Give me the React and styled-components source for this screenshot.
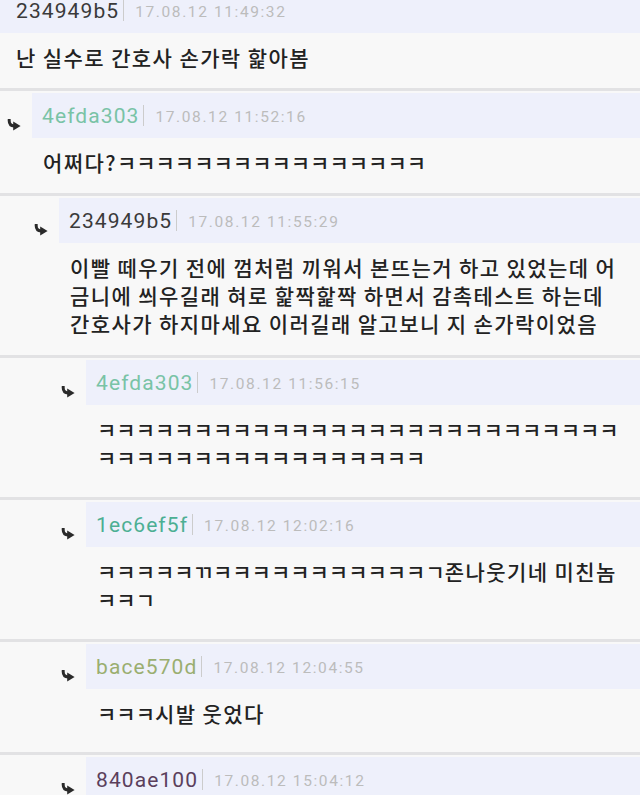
import React from "react";
import styled, { createGlobalStyle } from "styled-components";

const GlobalStyle = createGlobalStyle`
  html, body {
    margin: 0;
    padding: 0;
    background: #f8f8f8;
    overflow: hidden;
  }
`;

const Page = styled.div`
  width: 640px;
  height: 795px;
  overflow: hidden;
  background: #f8f8f8;
`;

// the screenshot starts part-way through the first comment header
const Thread = styled.div`
  margin-top: -14px;
`;

const Comment = styled.div`
  border-bottom: 3px solid #e2e2e4;
`;

const HeaderRow = styled.div`
  display: flex;
  align-items: flex-end;
  margin-top: 2px;
  padding-left: ${(p) => (p.$depth === 0 ? 0 : p.$depth * 27 - 20)}px;
`;

const ArrowBox = styled.div`
  width: 14px;
  height: 12px;
  margin: 0 11px 7px 0;
  flex-shrink: 0;
  display: flex;
`;

const Bar = styled.div`
  flex: 1;
  height: 45px;
  background: #eef0fb;
  display: flex;
  align-items: center;
  padding-left: ${(p) => (p.$depth === 0 ? 16 : 10)}px;
`;

const Name = styled.span`
  font-family: Roboto, "Liberation Sans", sans-serif;
  font-size: 21px;
  letter-spacing: 1.1px;
  color: ${(p) => p.$color};
`;

const Pipe = styled.span`
  width: 1px;
  height: 21px;
  background: #cccccc;
  margin: 0 11px 0 4px;
`;

const Stamp = styled.span`
  font-family: Roboto, "Liberation Sans", sans-serif;
  font-size: 15.5px;
  letter-spacing: 1.6px;
  color: #bcbcbc;
  padding-top: 2px;
`;

const Body = styled.div`
  padding: 10px 0 ${(p) => p.$pb}px ${(p) => 16 + p.$depth * 27}px;
  font-family: "Noto Sans CJK KR", "Noto Sans", sans-serif;
  font-size: 21px;
  font-weight: 500;
  letter-spacing: 1.4px;
  line-height: 28px;
  color: #222222;
  white-space: pre;
  overflow: hidden;
`;

// runs of ㅋ / ㄱ / ㄲ sit tighter than full syllables
const Jamo = styled.span`
  letter-spacing: 0;
`;

const isJamo = (ch) => ch >= "\u3131" && ch <= "\u318E";

const renderText = (text) => {
  const runs = [];
  let cur = "";
  let curJamo = null;
  for (const ch of text) {
    const j = isJamo(ch);
    if (curJamo !== null && j !== curJamo) {
      runs.push({ jamo: curJamo, str: cur });
      cur = "";
    }
    curJamo = j;
    cur += ch;
  }
  if (cur) runs.push({ jamo: curJamo, str: cur });
  return runs.map((r, i) => (r.jamo ? <Jamo key={i}>{r.str}</Jamo> : <React.Fragment key={i}>{r.str}</React.Fragment>));
};

const ReplyArrow = () => (
  <ArrowBox>
    <svg width="14" height="12" viewBox="0 0 14 12">
      <path d="M2.2 0.8 C2 4.6 3.4 6.8 7.2 7" fill="none" stroke="#2a2a2a" strokeWidth="3" strokeLinecap="round" />
      <polygon points="6.2,2.4 13.6,7 6.2,11.6" fill="#2a2a2a" />
    </svg>
  </ArrowBox>
);

const comments = [
  { depth: 0, name: "234949b5", color: "#3a3a3a", date: "17.08.12 11:49:32", pb: 17,
    text: "난 실수로 간호사 손가락 핥아봄" },
  { depth: 1, name: "4efda303", color: "#79c3a6", date: "17.08.12 11:52:16", pb: 17,
    text: "어쩌다?ㅋㅋㅋㅋㅋㅋㅋㅋㅋㅋㅋㅋㅋㅋㅋㅋ" },
  { depth: 2, name: "234949b5", color: "#3a3a3a", date: "17.08.12 11:55:29", pb: 18,
    text: "이빨 떼우기 전에 껌처럼 끼워서 본뜨는거 하고 있었는데 어\n금니에 씌우길래 혀로 핥짝핥짝 하면서 감촉테스트 하는데\n간호사가 하지마세요 이러길래 알고보니 지 손가락이었음" },
  { depth: 3, name: "4efda303", color: "#79c3a6", date: "17.08.12 11:56:15", pb: 26,
    text: "ㅋㅋㅋㅋㅋㅋㅋㅋㅋㅋㅋㅋㅋㅋㅋㅋㅋㅋㅋㅋㅋㅋㅋㅋㅋㅋㅋ\nㅋㅋㅋㅋㅋㅋㅋㅋㅋㅋㅋㅋㅋㅋㅋㅋㅋ" },
  { depth: 3, name: "1ec6ef5f", color: "#4caf93", date: "17.08.12 12:02:16", pb: 26,
    text: "ㅋㅋㅋㅋㅋㄲㅋㅋㅋㅋㅋㅋㅋㅋㅋㅋㅋㄱ존나웃기네 미친놈\nㅋㅋㄱ" },
  { depth: 3, name: "bace570d", color: "#9aae70", date: "17.08.12 12:04:55", pb: 25,
    text: "ㅋㅋㅋ시발 웃었다" },
  { depth: 3, name: "840ae100", color: "#5b3f5c", date: "17.08.12 15:04:12", pb: 20,
    text: "" },
];

export default function App() {
  return (
    <Page>
      <GlobalStyle />
      <Thread>
        {comments.map((c, i) => (
          <Comment key={i}>
            <HeaderRow $depth={c.depth}>
              {c.depth > 0 && <ReplyArrow />}
              <Bar $depth={c.depth}>
                <Name $color={c.color}>{c.name}</Name>
                <Pipe />
                <Stamp>{c.date}</Stamp>
              </Bar>
            </HeaderRow>
            <Body $depth={c.depth} $pb={c.pb}>{renderText(c.text)}</Body>
          </Comment>
        ))}
      </Thread>
    </Page>
  );
}
